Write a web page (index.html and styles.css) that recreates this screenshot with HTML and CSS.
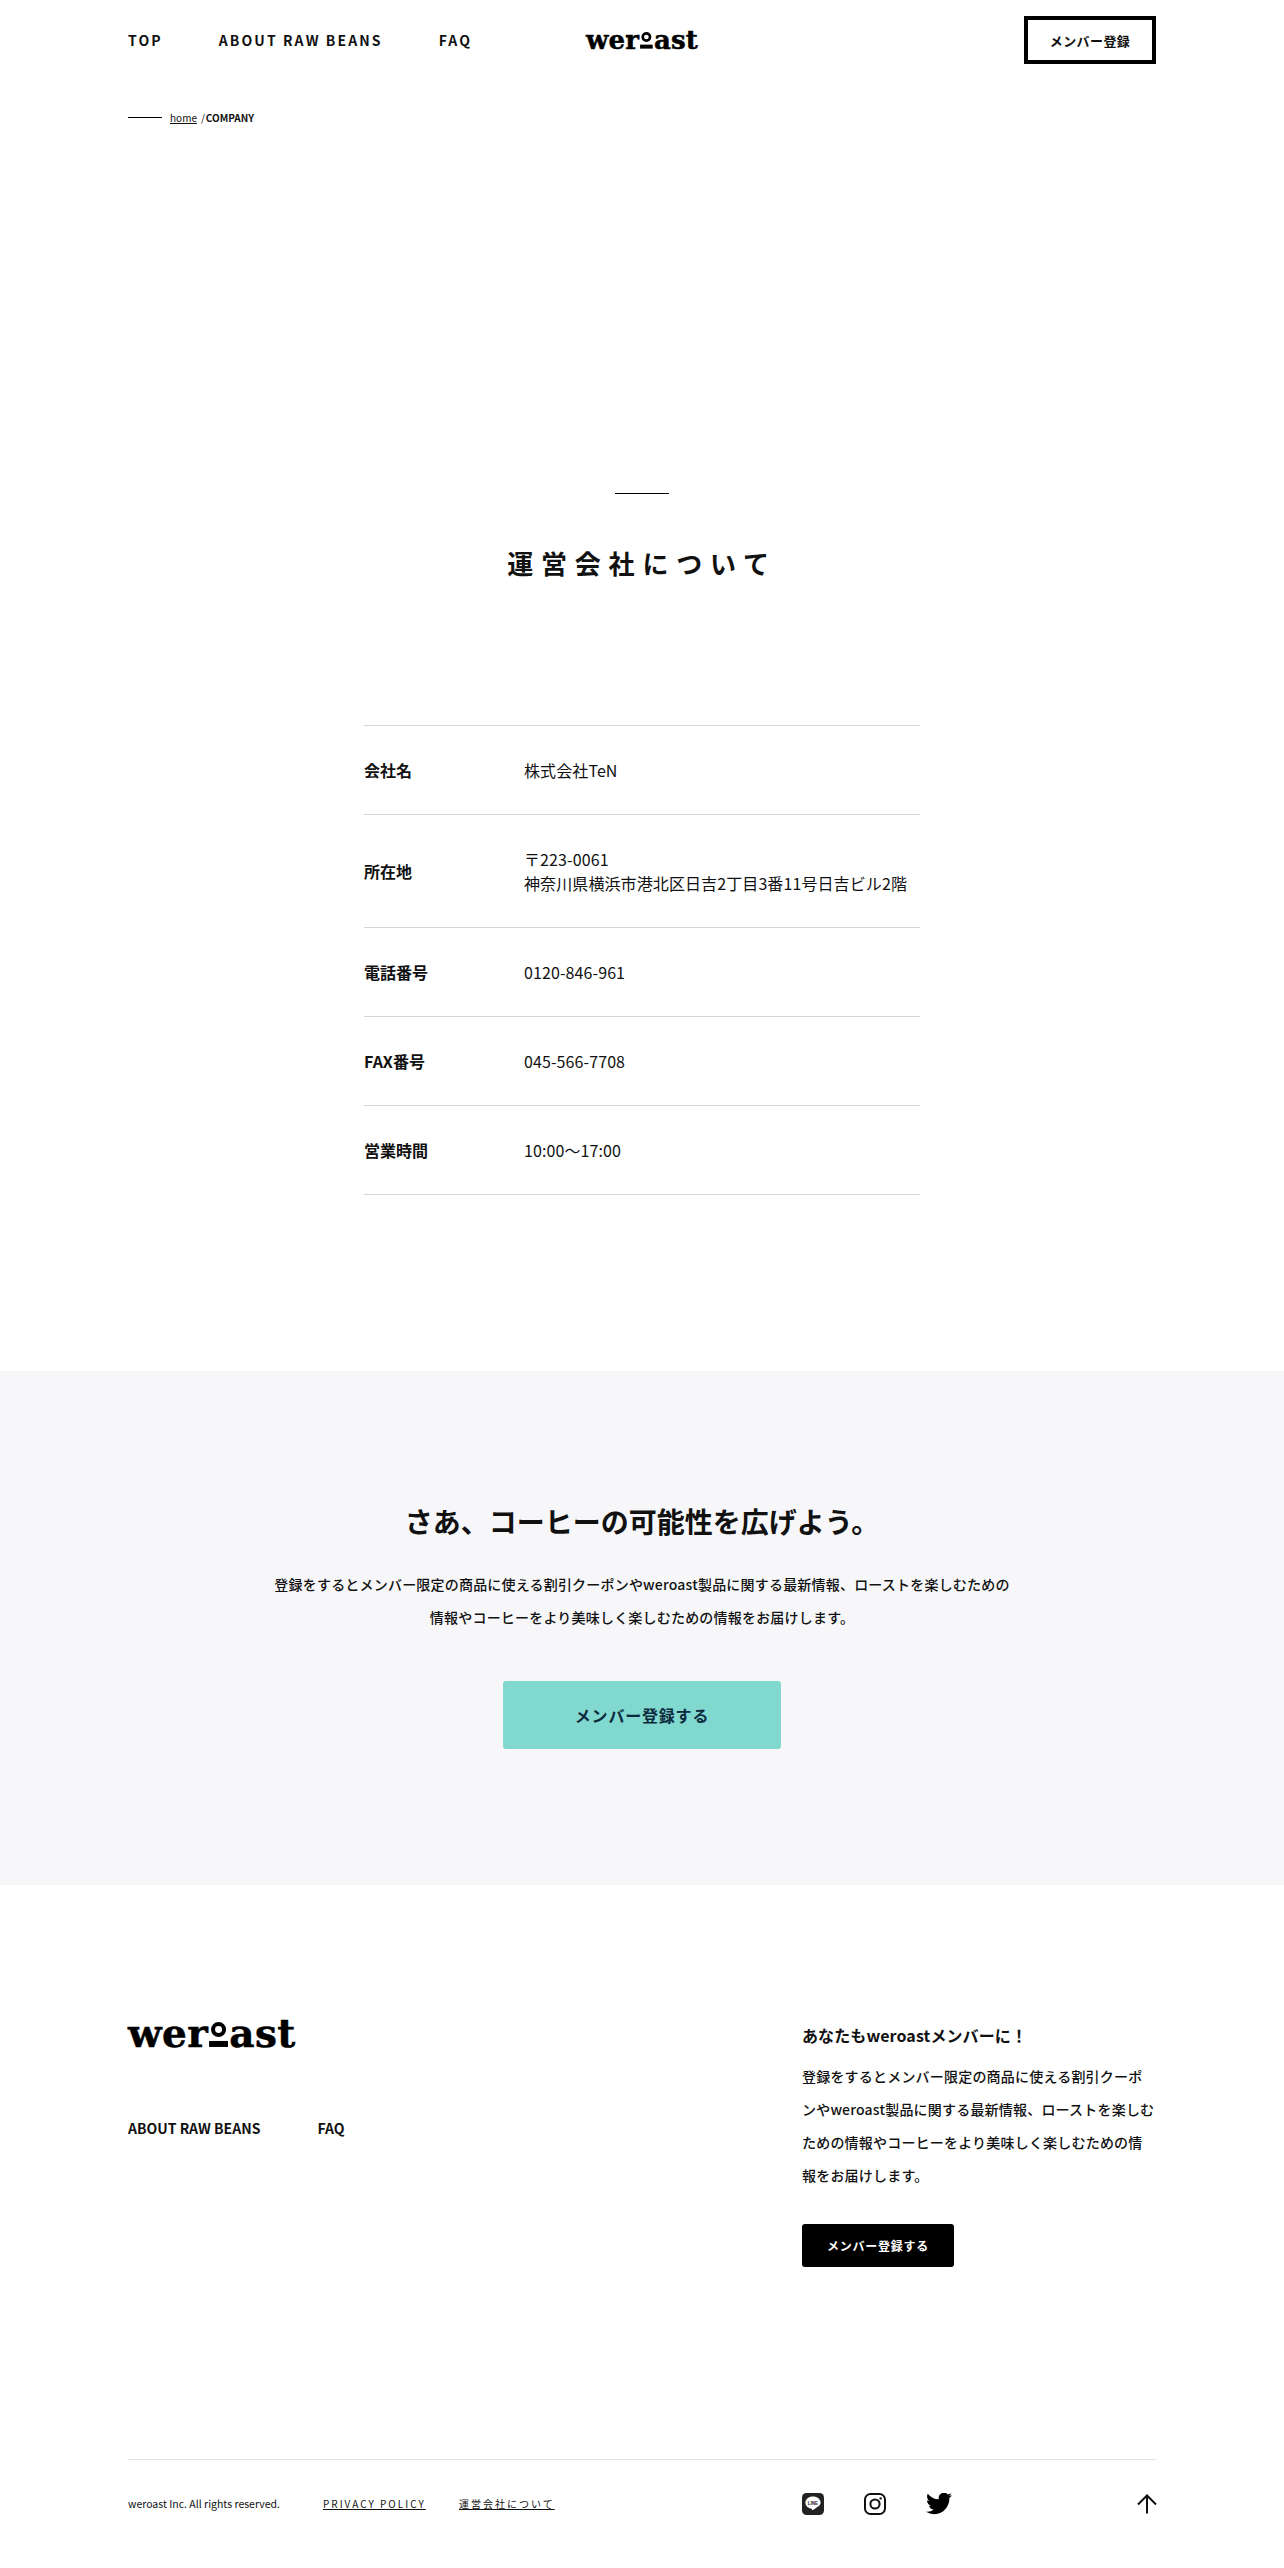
FILE: index.html
```html
<!DOCTYPE html>
<html lang="ja">
<head>
  <meta charset="UTF-8">
  <title>運営会社について | weroast</title>
  <link rel="stylesheet" href="styles.css">
</head>
<body>

  <header class="site-header">
    <nav class="header-nav">
      <a href="#">TOP</a>
      <a href="#">ABOUT RAW BEANS</a>
      <a href="#">FAQ</a>
    </nav>
    <a class="logo logo-small" href="#">wer<svg class="logo-o" viewBox="0 0 19 25"><circle cx="9.5" cy="7.500" r="5.500" fill="none" stroke="#000" stroke-width="4"/><rect x="0" y="19" width="19" height="6"/></svg>ast</a>
    <a class="header-btn" href="#">メンバー登録</a>
  </header>

  <div class="breadcrumb">
    <span class="breadcrumb-line"></span>
    <a href="#">home</a>
    <span class="breadcrumb-sep">/</span>
    <strong>COMPANY</strong>
  </div>

  <main>
    <section class="company">
      <div class="title-line"></div>
      <h1 class="page-title">運営会社について</h1>

      <dl class="company-table">
        <div class="company-row">
          <dt>会社名</dt>
          <dd>株式会社TeN</dd>
        </div>
        <div class="company-row">
          <dt>所在地</dt>
          <dd>〒223-0061<br>神奈川県横浜市港北区日吉2丁目3番11号日吉ビル2階</dd>
        </div>
        <div class="company-row">
          <dt>電話番号</dt>
          <dd>0120-846-961</dd>
        </div>
        <div class="company-row">
          <dt>FAX番号</dt>
          <dd>045-566-7708</dd>
        </div>
        <div class="company-row">
          <dt>営業時間</dt>
          <dd>10:00〜17:00</dd>
        </div>
      </dl>
    </section>

    <section class="signup">
      <h2>さあ、コーヒーの可能性を広げよう。</h2>
      <p>登録をするとメンバー限定の商品に使える割引クーポンやweroast製品に関する最新情報、ローストを楽しむための<br>情報やコーヒーをより美味しく楽しむための情報をお届けします。</p>
      <a class="signup-btn" href="#">メンバー登録する</a>
    </section>
  </main>

  <footer class="site-footer">
    <div class="footer-top">
      <div class="footer-left">
        <a class="logo logo-large" href="#">wer<svg class="logo-o" viewBox="0 0 19 25"><circle cx="9.5" cy="7.500" r="5.500" fill="none" stroke="#000" stroke-width="4"/><rect x="0" y="19" width="19" height="6"/></svg>ast</a>
        <nav class="footer-nav">
          <a href="#">ABOUT RAW BEANS</a>
          <a href="#">FAQ</a>
        </nav>
      </div>
      <div class="footer-member">
        <h3>あなたもweroastメンバーに！</h3>
        <p>登録をするとメンバー限定の商品に使える割引クーポンやweroast製品に関する最新情報、ローストを楽しむための情報やコーヒーをより美味しく楽しむための情報をお届けします。</p>
        <a class="footer-btn" href="#">メンバー登録する</a>
      </div>
    </div>

    <div class="footer-bottom">
      <small class="copyright">weroast Inc. All rights reserved.</small>
      <a class="footer-link link-policy" href="#">PRIVACY POLICY</a>
      <a class="footer-link link-company" href="#">運営会社について</a>
      <div class="social">
        <a href="#" aria-label="LINE">
          <svg width="22" height="22" viewBox="0 0 22 22">
            <rect width="22" height="22" rx="4.5" fill="#222"/>
            <path d="M11 3.6c-4.3 0-7.6 2.7-7.6 6.1 0 3 2.6 5.5 6.2 6 .5.1.4.5.3 1-.1.5.2.7.7.4 1.7-1 6-3.600 7.100-5.200.6-.7.9-1.400.9-2.200 0-3.400-3.300-6.100-7.600-6.100z" fill="#fff"/>
            <text class="line-text" x="11" y="11.700" text-anchor="middle">LINE</text>
          </svg>
        </a>
        <a href="#" aria-label="Instagram">
          <svg width="22" height="22" viewBox="0 0 22 22" fill="none" stroke="#111" stroke-width="2">
            <rect x="1" y="1" width="20" height="20" rx="5.500"/>
            <circle cx="11" cy="11" r="4.600"/>
            <circle cx="16.600" cy="5.400" r="1.200" fill="#111" stroke="none"/>
          </svg>
        </a>
        <a href="#" aria-label="Twitter">
          <svg width="26" height="22" viewBox="0 0 24 20" preserveAspectRatio="none">
            <path transform="translate(0 -2.500)" d="M23.953 4.570a10 10 0 01-2.825.775 4.958 4.958 0 002.163-2.723c-.951.555-2.005.959-3.127 1.184a4.920 4.920 0 00-8.384 4.482C7.690 8.095 4.067 6.130 1.640 3.162a4.822 4.822 0 00-.666 2.475c0 1.710.870 3.213 2.188 4.096a4.904 4.904 0 01-2.228-.616v.060a4.923 4.923 0 003.946 4.827 4.996 4.996 0 01-2.212.085 4.936 4.936 0 004.604 3.417 9.867 9.867 0 01-6.102 2.105c-.390 0-.779-.023-1.170-.067a13.995 13.995 0 007.557 2.209c9.053 0 13.998-7.496 13.998-13.985 0-.210 0-.420-.015-.630A9.935 9.935 0 0024 4.590z"/>
          </svg>
        </a>
      </div>
      <a class="to-top" href="#" aria-label="ページトップへ">
        <svg width="20" height="20" viewBox="0 0 20 20" fill="none" stroke="#111" stroke-width="2">
          <path d="M10 19.500V1.500M1 10.500l9-9 9 9"/>
        </svg>
      </a>
    </div>
  </footer>

</body>
</html>
```

FILE: styles.css
```css
* {
  box-sizing: border-box;
}

body {
  margin: 0;
  background: #fff;
  color: #111;
  font-family: "Noto Sans CJK JP", "Noto Sans", sans-serif;
}

a {
  color: inherit;
  text-decoration: none;
}

/* ロゴ */
.logo {
  display: inline-flex;
  align-items: baseline;
  color: #000;
  font-family: "DejaVu Serif", serif;
  font-weight: bold;
  line-height: 1;
  -webkit-text-stroke: 0.5px #000;
}

.logo-small {
  font-size: 26px;
  letter-spacing: 0.2px;
}

.logo-large {
  font-size: 39px;
  letter-spacing: 0.4px;
}

.logo-o {
  height: 0.64em;
  width: 0.49em;
  fill: #000;
  margin: 0 1px;
}

/* ヘッダー */
.site-header {
  display: grid;
  grid-template-columns: 1fr auto 1fr;
  align-items: center;
  height: 80px;
  padding: 0 128px;
}

.header-nav {
  display: flex;
  gap: 56px;
  font-size: 14px;
  font-weight: 700;
  letter-spacing: 2.1px;
}

.header-btn {
  justify-self: end;
  display: flex;
  justify-content: center;
  align-items: center;
  width: 132px;
  height: 48px;
  border: 4px solid #000;
  font-size: 13px;
  font-weight: 700;
  letter-spacing: 0.03em;
}

.breadcrumb {
  display: flex;
  align-items: center;
  height: 20px;
  margin-top: 27px;
  padding: 0 128px;
  font-size: 10px;
}

.breadcrumb-line {
  width: 34px;
  height: 1px;
  margin: 1px 8px 0 0;
  background: #000;
}

.breadcrumb a {
  text-decoration: underline;
}

.breadcrumb-sep {
  margin: 0 1px 0 4px;
}

/* 運営会社 */
.company {
  padding-top: 366px;
  padding-bottom: 176px;
}

.title-line {
  width: 54px;
  height: 1px;
  margin: 0 auto;
  background: #000;
}

.page-title {
  margin: 49px 0 0;
  text-align: center;
  font-size: 26px;
  font-weight: 700;
  line-height: 40px;
  letter-spacing: 0.3em;
}

.company-table {
  width: 556px;
  margin: 142px auto 0;
  border-top: 1px solid #d5d5d5;
  font-size: 16px;
}

.company-row {
  display: flex;
  align-items: center;
  padding: 32px 0;
  border-bottom: 1px solid #d5d5d5;
  line-height: 24px;
}

.company-row dt {
  width: 160px;
  font-weight: 700;
}

.company-row dd {
  margin: 0;
  letter-spacing: 0.1px;
}

/* メンバー登録 */
.signup {
  height: 514px;
  padding-top: 124px;
  background: #f7f7f9;
  text-align: center;
}

.signup h2 {
  margin: 0;
  font-size: 28px;
  font-weight: 700;
  line-height: 52px;
}

.signup p {
  margin: 21px 0 0;
  font-size: 14px;
  font-weight: 500;
  line-height: 33px;
  letter-spacing: 0.2px;
}

.signup-btn {
  display: flex;
  justify-content: center;
  align-items: center;
  width: 278px;
  height: 68px;
  margin: 47px auto 0;
  background: #80d8cf;
  border-radius: 3px;
  color: #0d2b3e;
  font-size: 16px;
  font-weight: 700;
  letter-spacing: 0.05em;
}

/* フッター */
.site-footer {
  padding: 124px 128px 0;
}

.footer-top {
  display: flex;
  justify-content: space-between;
  height: 450px;
}

.footer-left {
  padding-top: 5px;
}

.footer-nav {
  display: flex;
  gap: 57px;
  margin-top: 65px;
  font-size: 14px;
  font-weight: 700;
}

.footer-member {
  width: 354px;
  padding-top: 12px;
}

.footer-member h3 {
  margin: 0;
  font-size: 16px;
  font-weight: 700;
  line-height: 28px;
  letter-spacing: 0.1px;
}

.footer-member p {
  margin: 11px 0 0;
  font-size: 14px;
  font-weight: 500;
  line-height: 33px;
  letter-spacing: 0.2px;
}

.footer-btn {
  display: flex;
  justify-content: center;
  align-items: center;
  width: 152px;
  height: 43px;
  margin-top: 32px;
  background: #000;
  border-radius: 3px;
  color: #fff;
  font-size: 12px;
  font-weight: 700;
  letter-spacing: 0.06em;
}

.footer-bottom {
  display: flex;
  align-items: center;
  height: 88px;
  border-top: 1px solid #e5e5e5;
}

.copyright {
  width: 195px;
  font-size: 10.5px;
}

.footer-link {
  font-size: 10px;
  letter-spacing: 2px;
  text-decoration: underline;
}

.link-policy {
  width: 136px;
}

.link-company {
  width: 343px;
}

.social {
  display: flex;
  align-items: center;
  gap: 40px;
}

.social a {
  display: flex;
}

.line-text {
  font-family: "Liberation Sans", sans-serif;
  font-size: 4.500px;
  font-weight: 700;
  fill: #222;
}

.to-top {
  display: flex;
  margin-left: auto;
  margin-right: -1px;
}
```
